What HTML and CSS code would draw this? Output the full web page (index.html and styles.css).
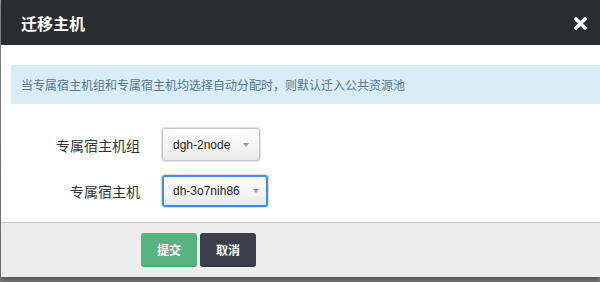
FILE: index.html
```html
<!DOCTYPE html>
<html lang="zh-CN">
<head>
  <meta charset="UTF-8">
  <title>迁移主机</title>
  <meta name="viewport" content="width=device-width, initial-scale=1.0">
  <link rel="stylesheet" href="styles.css">
</head>
<body>

  <div class="modal">
    <div class="modal-header">
      <h3>迁移主机</h3>
      <span class="close" aria-label="关闭">
        <svg width="13" height="13" viewBox="0 0 13 13">
          <path d="M2 2 L11 11 M11 2 L2 11" stroke="#fff" stroke-width="3.6" stroke-linecap="round" fill="none"/>
        </svg>
      </span>
    </div>

    <div class="modal-body">
      <div class="alert">当专属宿主机组和专属宿主机均选择自动分配时，则默认迁入公共资源池</div>

      <div class="form">
        <label>专属宿主机组</label>
        <div class="select">
          <span>dgh-2node</span>
          <i class="caret"></i>
        </div>

        <label>专属宿主机</label>
        <div class="select focused">
          <span>dh-3o7nih86</span>
          <i class="caret"></i>
        </div>
      </div>
    </div>

    <div class="modal-footer">
      <button class="btn btn-submit">提交</button>
      <button class="btn btn-cancel">取消</button>
    </div>
  </div>

</body>
</html>
```

FILE: styles.css
```css
body {
  margin: 0;
  height: 282px;
  overflow: hidden;
  background: linear-gradient(to bottom, #9a9a9a, #7c7c7c);
  font-family: "Liberation Sans", "Noto Sans CJK SC", sans-serif;
}

.modal {
  margin-left: 1px;
  background: #fff;
  box-shadow: 0 3px 6px rgba(0, 0, 0, 0.35);
}

.modal-header {
  height: 45px;
  background: #2a2d2f;
  display: flex;
  align-items: center;
  justify-content: space-between;
  padding: 0 13px 0 20px;
}

.modal-header h3 {
  margin: 0;
  color: #fff;
  font-family: "Noto Sans CJK SC", sans-serif;
  font-size: 16px;
  font-weight: bold;
  line-height: 20px;
}

.close {
  display: flex;
  width: 13px;
  height: 13px;
  margin-top: 1px;
}

.modal-body {
  padding: 20px 0 15px 10px;
}

.alert {
  height: 39px;
  line-height: 39px;
  padding-left: 10px;
  background: #d9edf6;
  color: #527996;
  font-family: "Noto Sans CJK SC", sans-serif;
  font-size: 12px;
}

.form {
  margin-top: 24px;
  display: grid;
  grid-template-columns: 129px auto;
  column-gap: 22px;
  row-gap: 14px;
  align-items: center;
  justify-items: start;
}

.form label {
  justify-self: end;
  color: #333;
  font-family: "Noto Sans CJK SC", sans-serif;
  font-size: 14px;
  line-height: 20px;
}

.select {
  box-sizing: border-box;
  height: 33px;
  display: flex;
  align-items: center;
  padding: 0 10px 0 10px;
  border: 1px solid #c6c4d2;
  box-shadow: 0 0 0 1px #e4e2ec;
  border-radius: 3px;
  background: linear-gradient(to bottom, #ffffff, #ebebeb);
  color: #222;
  font-size: 12px;
}

.select.focused {
  height: 32px;
  border: 2px solid #3f8ee8;
  box-shadow: 0 0 0 1px #dcdae6;
  padding: 0 7px 0 9px;
}

.caret {
  margin-left: 13px;
  width: 0;
  height: 0;
  border-left: 3.5px solid transparent;
  border-right: 3.5px solid transparent;
  border-top: 4px solid #999;
}

.modal-footer {
  border-top: 1px solid #c9c8d8;
  background: #ededed;
  padding: 10px 0 10px 140px;
  display: flex;
  gap: 3px;
}

.btn {
  width: 56px;
  height: 34px;
  border: none;
  border-radius: 3px;
  color: #fff;
  font-family: "Noto Sans CJK SC", sans-serif;
  font-size: 12px;
  font-weight: bold;
  cursor: pointer;
}

.btn-submit {
  background: #56b482;
  border-bottom: 2px solid #4ea876;
}

.btn-cancel {
  background: #3b3f4b;
  border-bottom: 2px solid #353844;
}
```
